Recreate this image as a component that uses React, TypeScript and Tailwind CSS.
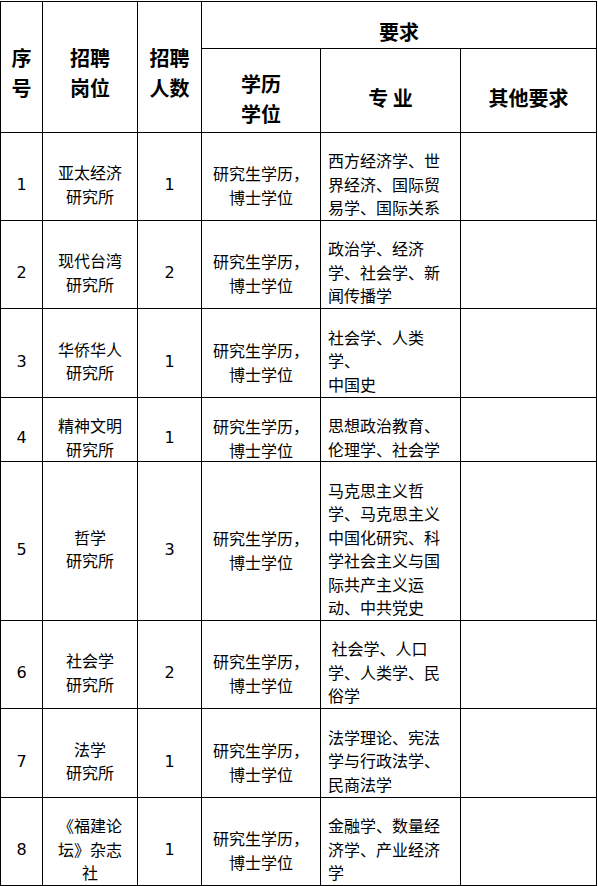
import React from "react";

const rows = [
  { n: "1", post: ["亚太经济", "研究所"], count: "1", major: ["西方经济学、世", "界经济、国际贸", "易学、国际关系"] },
  { n: "2", post: ["现代台湾", "研究所"], count: "2", major: ["政治学、经济", "学、社会学、新", "闻传播学"] },
  { n: "3", post: ["华侨华人", "研究所"], count: "1", major: ["社会学、人类", "学、", "中国史"] },
  { n: "4", post: ["精神文明", "研究所"], count: "1", major: ["思想政治教育、", "伦理学、社会学"] },
  { n: "5", post: ["哲学", "研究所"], count: "3", major: ["马克思主义哲", "学、马克思主义", "中国化研究、科", "学社会主义与国", "际共产主义运", "动、中共党史"] },
  { n: "6", post: ["社会学", "研究所"], count: "2", major: [" 社会学、人口", "学、人类学、民", "俗学"] },
  { n: "7", post: ["法学", "研究所"], count: "1", major: ["法学理论、宪法", "学与行政法学、", "民商法学"] },
  { n: "8", post: ["《福建论", "坛》杂志", "社"], count: "1", major: ["金融学、数量经", "济学、产业经济", "学"] },
];

const cjk = { fontFamily: '"Noto Sans CJK SC", "Noto Sans", sans-serif' };
const num = { fontFamily: '"DejaVu Sans", "Noto Sans CJK SC", sans-serif' };

function H({ children, className = "" }: { children: React.ReactNode; className?: string }) {
  return (
    <div className={"bg-white flex items-center justify-center text-center font-bold text-[20px] leading-[30px] " + className}>
      <div>{children}</div>
    </div>
  );
}

export default function App() {
  return (
    <div className="bg-white w-[598px] h-[886px] overflow-hidden text-black" style={cjk}>
      <div className="mt-px w-[597px] bg-black p-px">
        <div
          className="grid gap-px bg-black"
          style={{
            gridTemplateColumns: "41px 94px 63px 118px 139px 135px",
            gridTemplateRows: "46px 83px 87px 87px 88px 63px 158px 87px 88px 87px",
          }}
        >
          <H className="row-span-2 pt-[11px]">
            序<br />号
          </H>
          <H className="row-span-2 pt-[11px]">
            招聘<br />岗位
          </H>
          <H className="row-span-2 pt-[11px]">
            招聘<br />人数
          </H>
          <H className="col-span-3 pt-[14px]">要求</H>
          <H className="pt-[16px]">
            学历<br />学位
          </H>
          <H className="pt-[15px]">专 业</H>
          <H className="pt-[15px]">其他要求</H>
          {rows.map((r) => (
            <React.Fragment key={r.n}>
              <div className="bg-white flex items-center justify-center text-[16px] leading-[24px] pt-[17px]" style={num}>
                {r.n}
              </div>
              <div className="bg-white flex items-center justify-center text-center text-[16px] leading-[23.5px] pt-[16px]">
                <div>
                  {r.post.map((p, i) => (
                    <div key={i} className="whitespace-nowrap">{p}</div>
                  ))}
                </div>
              </div>
              <div className="bg-white flex items-center justify-center text-[16px] leading-[24px] pt-[17px]" style={num}>
                {r.count}
              </div>
              <div className="bg-white flex items-center justify-center text-center text-[16px] leading-[24px] pt-[17px]">
                <div>
                  <div className="whitespace-nowrap">研究生学历，</div>
                  <div className="whitespace-nowrap">博士学位</div>
                </div>
              </div>
              <div className="bg-white flex items-center text-[16px] leading-[23.5px] pt-[16px] pl-[7px]">
                <div>
                  {r.major.map((m, i) => (
                    <div key={i} className="whitespace-pre">{m}</div>
                  ))}
                </div>
              </div>
              <div className="bg-white" />
            </React.Fragment>
          ))}
        </div>
      </div>
    </div>
  );
}
